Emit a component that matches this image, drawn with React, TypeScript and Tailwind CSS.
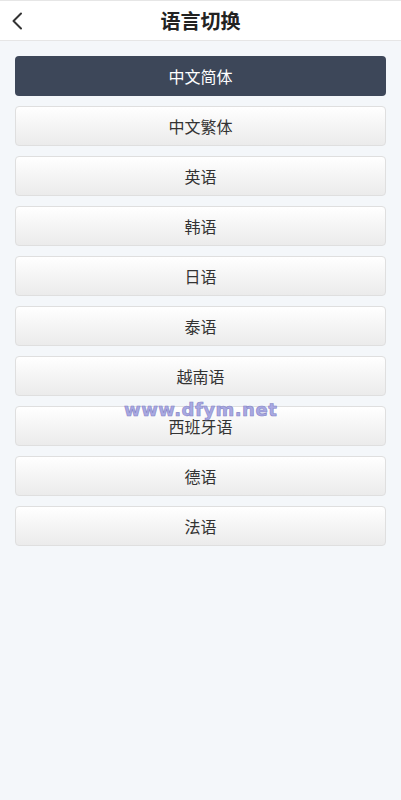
import React from "react";

const languages = ["中文简体", "中文繁体", "英语", "韩语", "日语", "泰语", "越南语", "西班牙语", "德语", "法语"];

const App = () => {
  const active = 0;
  return (
    <div className="relative min-h-[800px] bg-[#f4f7fa] font-['Noto_Sans_CJK_SC',sans-serif]">
      {/* Header */}
      <div className="relative flex h-[41px] items-center justify-center border-t border-b border-[#e6e6e6] bg-white">
        <button className="absolute left-[10px] top-[11px] flex h-[18px] w-[14px] items-center justify-center">
          <svg width="12" height="18" viewBox="0 0 12 18" fill="none">
            <path d="M10 1.5L2.5 9L10 16.5" stroke="#333" strokeWidth="2" strokeLinecap="round" strokeLinejoin="round" />
          </svg>
        </button>
        <h1 className="text-[20px] font-bold leading-none text-[#222]">语言切换</h1>
      </div>

      {/* Language list */}
      <div className="flex flex-col gap-[10px] px-[15px] pt-[15px]">
        {languages.map((lang, i) =>
          i === active ? (
            <button
              key={lang}
              className="h-[40px] w-full rounded-[4px] bg-[#3d4759] text-[16px] text-white"
            >
              {lang}
            </button>
          ) : (
            <button
              key={lang}
              className="h-[40px] w-full rounded-[4px] border border-[#dfdfdf] bg-gradient-to-b from-white to-[#ebebeb] text-[16px] text-[#333]"
            >
              {lang}
            </button>
          )
        )}
      </div>

      {/* watermark */}
      <div className="pointer-events-none absolute left-[124px] top-[399px] text-[18px] font-bold leading-[22px] tracking-[0.5px] text-[#a9a9e2] [-webkit-text-stroke:0.6px_#8585c6] font-['DejaVu_Sans',sans-serif]">
        www.dfym.net
      </div>
    </div>
  );
};

export default App;
